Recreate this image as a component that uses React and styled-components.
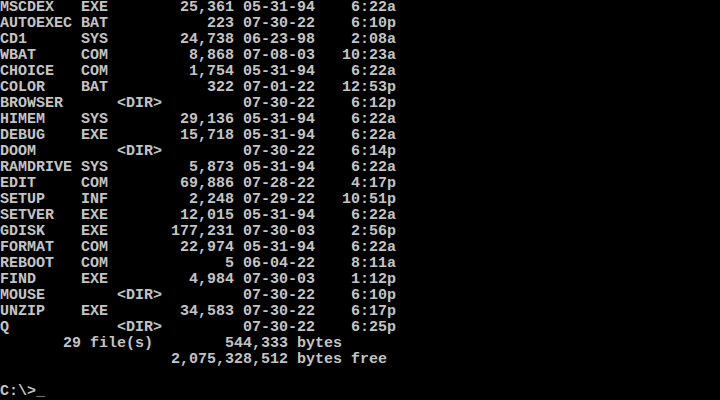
import styled, { createGlobalStyle } from 'styled-components';

const Global = createGlobalStyle`
  html, body {
    margin: 0;
    padding: 0;
    background: #000;
  }
`;

const Screen = styled.div`
  width: 720px;
  height: 400px;
  background: #000;
  color: #c4c4c4;
  font-family: "Liberation Mono", "DejaVu Sans Mono", monospace;
  font-size: 15px;
  font-weight: bold;
  overflow: hidden;
  display: flex;
  flex-direction: column;
`;

const Line = styled.div`
  height: 16px;
  line-height: 16px;
  white-space: pre;
`;

const files = [
  ['MSCDEX', 'EXE', '25,361', '05-31-94', '6:22a'],
  ['AUTOEXEC', 'BAT', '223', '07-30-22', '6:10p'],
  ['CD1', 'SYS', '24,738', '06-23-98', '2:08a'],
  ['WBAT', 'COM', '8,868', '07-08-03', '10:23a'],
  ['CHOICE', 'COM', '1,754', '05-31-94', '6:22a'],
  ['COLOR', 'BAT', '322', '07-01-22', '12:53p'],
  ['BROWSER', '', '<DIR>', '07-30-22', '6:12p'],
  ['HIMEM', 'SYS', '29,136', '05-31-94', '6:22a'],
  ['DEBUG', 'EXE', '15,718', '05-31-94', '6:22a'],
  ['DOOM', '', '<DIR>', '07-30-22', '6:14p'],
  ['RAMDRIVE', 'SYS', '5,873', '05-31-94', '6:22a'],
  ['EDIT', 'COM', '69,886', '07-28-22', '4:17p'],
  ['SETUP', 'INF', '2,248', '07-29-22', '10:51p'],
  ['SETVER', 'EXE', '12,015', '05-31-94', '6:22a'],
  ['GDISK', 'EXE', '177,231', '07-30-03', '2:56p'],
  ['FORMAT', 'COM', '22,974', '05-31-94', '6:22a'],
  ['REBOOT', 'COM', '5', '06-04-22', '8:11a'],
  ['FIND', 'EXE', '4,984', '07-30-03', '1:12p'],
  ['MOUSE', '', '<DIR>', '07-30-22', '6:10p'],
  ['UNZIP', 'EXE', '34,583', '07-30-22', '6:17p'],
  ['Q', '', '<DIR>', '07-30-22', '6:25p'],
];

// name(8) ext(3) size(14, right) date time(7, right) -- like DOS 6 DIR
const formatRow = ([name, ext, size, date, time]) => {
  const head = name.padEnd(9) + ext.padEnd(3);
  const sizeCol = size === '<DIR>' ? ' <DIR>'.padEnd(14) : size.padStart(14);
  return head + sizeCol + ' ' + date + '  ' + time.padStart(7);
};

export default function App() {
  return (
    <>
      <Global />
      <Screen>
        {files.map((f) => (
          <Line key={f[0]}>{formatRow(f)}</Line>
        ))}
        <Line>{'       29 file(s)        544,333 bytes'}</Line>
        <Line>{'                   2,075,328,512 bytes free'}</Line>
        <Line>{' '}</Line>
        <Line>{'C:\\>_'}</Line>
      </Screen>
    </>
  );
}
